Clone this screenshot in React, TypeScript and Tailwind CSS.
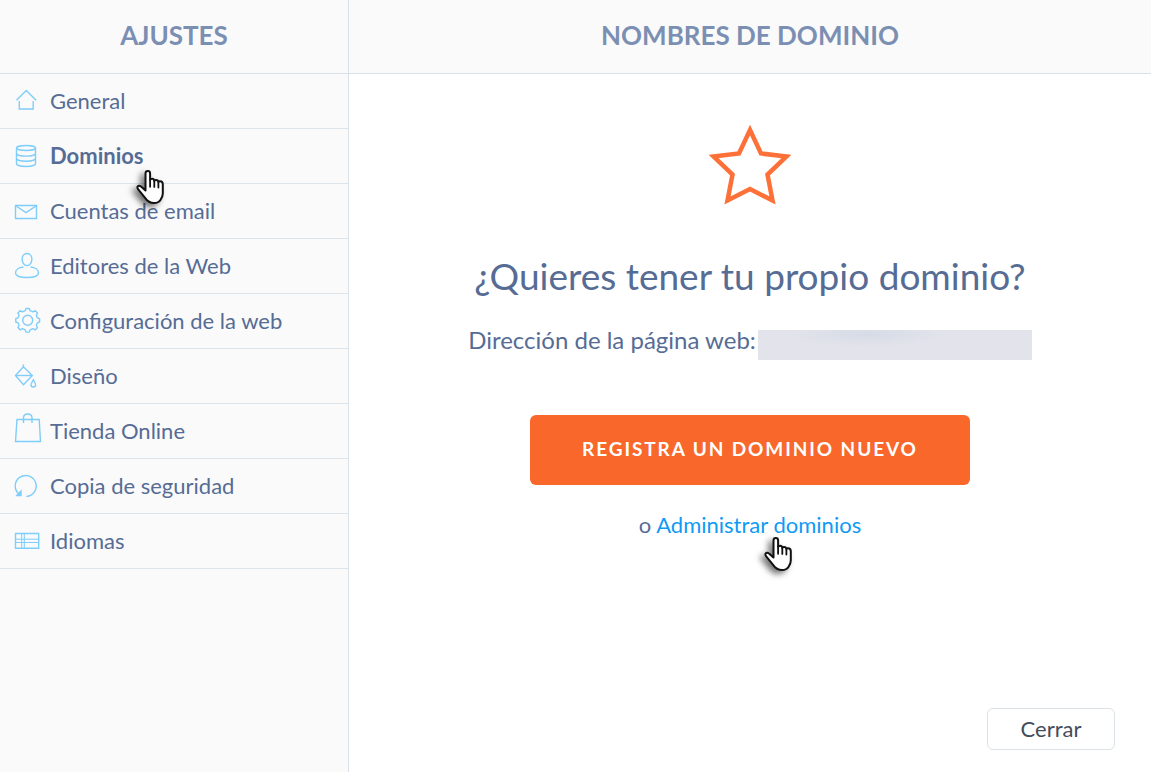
import clsx from "clsx";

const icons = {
  home: (
    <>
      <path d="M4.5 14.2 14.3 4.6l9.8 9.6" />
      <path d="M7.3 15v8h13.9v-8" />
    </>
  ),
  database: (
    <>
      <ellipse cx="14" cy="7" rx="9.5" ry="2.5" />
      <path d="M4.5 7v15.8c0 1.5 4.2 2.7 9.5 2.7s9.5-1.2 9.5-2.7V7" />
      <path d="M4.5 12.4c0 1.5 4.2 2.7 9.5 2.7s9.5-1.2 9.5-2.7M4.5 17.6c0 1.5 4.2 2.7 9.5 2.7s9.5-1.2 9.5-2.7" />
    </>
  ),
  mail: (
    <>
      <path d="M3.5 9.5h21v13h-21z" />
      <path d="m4 10 10 6.6L24 10" />
    </>
  ),
  user: (
    <>
      <path d="M15 2.5c3 0 4.9 2.4 4.9 5.6 0 3.5-2 6.5-4.9 6.5s-4.9-3-4.9-6.5c0-3.2 1.9-5.6 4.9-5.6z" />
      <path d="M11.5 16C6.5 16.5 3.5 19 3.5 21.7c0 3.2 5.2 4.8 11.5 4.8s11.5-1.6 11.5-4.8c0-2.7-3-5.2-8-5.7" />
    </>
  ),
  gear: (
    <>
      <path
        d="M13.3 4.7 14 2.5h3.4l.7 2.2 2.8 1.2 2.3-1.200 2.300 2.300-1.200 2.300 1.100 2.500 2.200.8v3.400l-2.200.8-1.100 2.500 1.200 2.300-2.300 2.300-2.300-1.200-2.800 1.200-.7 2.200H14l-.7-2.200-2.800-1.200-2.300 1.200-2.300-2.300 1.200-2.300L6 16.800l-2.200-.8v-3.400l2.200-.8 1.100-2.500L5.900 7l2.300-2.300 2.300 1.200z"
        strokeLinejoin="round"
      />
      <circle cx="15.700" cy="14.300" r="5" />
    </>
  ),
  paint: (
    <>
      <path d="M11.4 3.5v2.3L3.5 14.5l8 9.2 8.800-9.200-8.900-8.700" />
      <path d="M3.5 14.500h16.800" />
      <path d="M21.3 18.800c1.200 2.200 2.300 3.800 2.300 5.200 0 1.200-.9 2-2.300 2s-2.300-.8-2.300-2c0-1.400 1.100-3 2.300-5.200z" />
    </>
  ),
  bag: (
    <>
      <path d="M5 3.5h22.2l1.3 22h-25z" />
      <path d="M11.5 7V1.8C11.5-.6 13.2-2 15.7-2S20-.6 20 1.8V7" />
    </>
  ),
  restore: (
    <>
      <path d="M14.5 25.5A10.5 10.5 0 1 0 7.500 23.500" />
      <path d="M4.800 24.500h4.200v-4.500z" className="fill-[#7fcdfb]" />
    </>
  ),
  flag: (
    <>
      <path d="M3.5 7.500h23.200v14.800H3.500z" />
      <path d="M3.500 13.200h23.200M3.500 16.500h23.200M9.700 7.500v14.800M12.300 7.500v14.800" strokeWidth="1" />
    </>
  ),
};

type IconName = keyof typeof icons;

const menu: { label: string; icon: IconName }[] = [
  { label: "General", icon: "home" },
  { label: "Dominios", icon: "database" },
  { label: "Cuentas de email", icon: "mail" },
  { label: "Editores de la Web", icon: "user" },
  { label: "Configuración de la web", icon: "gear" },
  { label: "Diseño", icon: "paint" },
  { label: "Tienda Online", icon: "bag" },
  { label: "Copia de seguridad", icon: "restore" },
  { label: "Idiomas", icon: "flag" },
];

function MenuIcon({ name }: { name: IconName }) {
  return (
    <svg
      viewBox="0 0 30 30"
      className="size-[30px] shrink-0 overflow-visible fill-none stroke-[#7fcdfb]"
      strokeWidth="1.4"
      aria-hidden="true"
    >
      {icons[name]}
    </svg>
  );
}

function HandCursor({ className }: { className?: string }) {
  return (
    <svg
      viewBox="0 0 28 34"
      className={clsx("pointer-events-none absolute z-10 h-[34px] w-7 overflow-visible drop-shadow-[-4px_3px_3px_rgba(0,0,0,0.55)]", className)}
      aria-hidden="true"
    >
      <path
        d="M9.5 20.5V3.4C9.5 1.9 10.5 1 11.8 1s2.3.9 2.3 2.4v6.400c.4-.7 1.100-1 1.900-1 1.300 0 2.200.8 2.300 2 .4-.6 1.100-.9 1.800-.9 1.300 0 2.200.9 2.300 2.100.4-.5 1-.7 1.600-.7 1.700 0 2.800 1.100 2.800 2.900v9.300c0 2.500-.9 4.200-2.200 6.200-1.500 2.300-3.500 3.300-6.600 3.300-3.800 0-6.400-1.500-8.700-4.900L2.200 19.400c-.9-1.500-1.200-2.500-.4-3.200.9-.8 2.300-.4 3.500.5z"
        fill="#fff"
        stroke="#111"
        strokeWidth="2"
        strokeLinejoin="round"
      />
      <path d="M14.1 9.8v7M18.3 10.9v6M22.4 12v5.5" fill="none" stroke="#111" strokeWidth="1.8" strokeLinecap="round" />
    </svg>
  );
}

function Sidebar() {
  return (
    <aside className="w-[349px] shrink-0 border-r border-[#dbe1e8] bg-[#fafafa]">
      <header className="flex h-[74px] items-center justify-center border-b border-[#d9e1ec] pb-0.5">
        <h2 className="text-[26px] font-bold text-[#7b8fb3]">AJUSTES</h2>
      </header>
      <nav>
        <ul>
          {menu.map(({ label, icon }) => (
            <li key={label} className="relative border-b border-[#dde5ec]">
              <button
                type="button"
                className={clsx("flex h-[54px] w-full items-center gap-2 pl-3 text-left text-[22px]", label === "Dominios" && "font-bold")}
              >
                <MenuIcon name={icon} />
                <span className="pb-0.5">{label}</span>
              </button>
              {label === "Dominios" && <HandCursor className="top-[41px] left-[136px]" />}
            </li>
          ))}
        </ul>
      </nav>
    </aside>
  );
}

export default function App() {
  return (
    <div className="flex min-h-screen bg-white font-[Lato,sans-serif] text-[#566c95]">
      <Sidebar />
      <section className="flex flex-1 flex-col">
        <header className="flex h-[74px] items-center justify-center border-b border-[#dbe1e8] bg-[#fafafa] pb-0.5">
          <h1 className="text-[26px] font-bold text-[#7b8fb3]">NOMBRES DE DOMINIO</h1>
        </header>
        <main className="flex flex-1 flex-col items-center text-[22px]">
          <svg viewBox="0 0 82 80" className="mt-[51px] h-20 w-[82px]" aria-hidden="true">
            <path
              d="M41 5 52 28.5 77.5 31.5 58.5 49.5 63.5 75.5 41 64 18.5 75.5 23.5 49.5 4.5 31.5 30 28.5z"
              fill="none"
              stroke="#fd7038"
              strokeWidth="4.5"
            />
          </svg>
          <h2 className="mt-12 text-[37px] leading-[46px]">¿Quieres tener tu propio dominio?</h2>
          <p className="mt-7 flex h-8 items-start gap-0.5 text-2xl leading-[26px]">
            Dirección de la página web:
            {/* blurred-out address */}
            <span className="mt-[3px] h-[30px] w-[274px] bg-[#e3e4eb] bg-[radial-gradient(ellipse_at_40%_15%,#d5dbe6,transparent_35%)]" />
          </p>
          <button type="button" className="mt-14 h-[70px] w-[440px] rounded-md bg-[#f9672b] pb-0.5 text-[19px] font-bold tracking-widest text-white">
            REGISTRA UN DOMINIO NUEVO
          </button>
          <p className="relative mt-6 leading-8">
            o <a href="#" className="text-[#0f9af5]">Administrar dominios</a>
            <HandCursor className="top-7 left-[125px]" />
          </p>
          <button type="button" className="mt-auto mr-9 mb-[22px] h-[42px] w-32 self-end rounded-md border border-[#dce2e6] bg-white pb-0.5 text-[#454c5c]">
            Cerrar
          </button>
        </main>
      </section>
    </div>
  );
}
